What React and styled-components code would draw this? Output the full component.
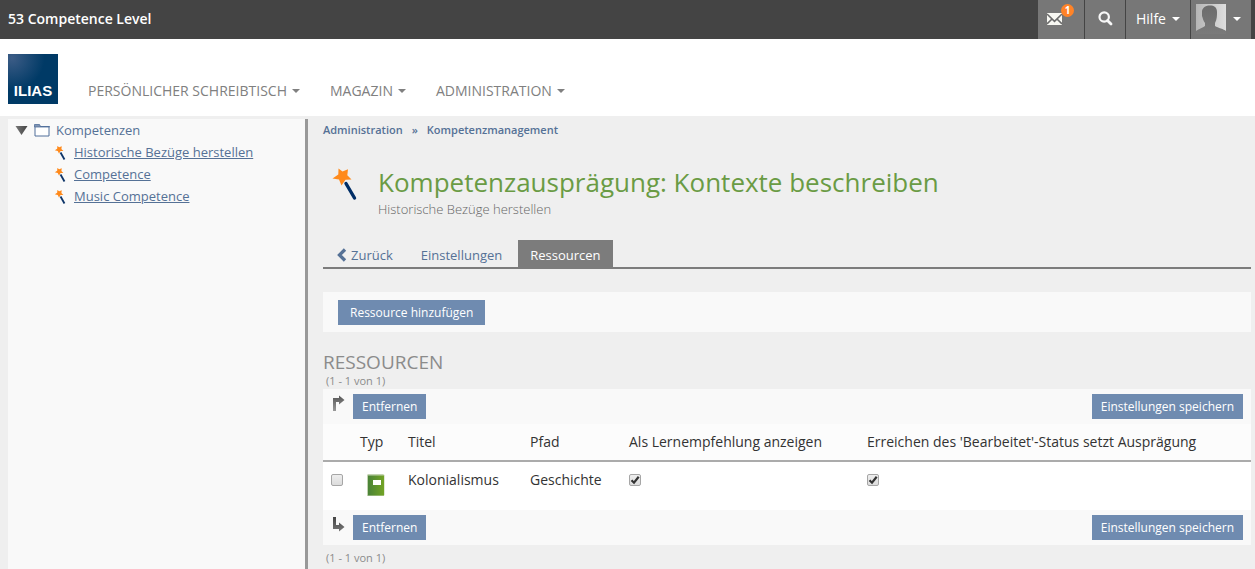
import React from 'react';
import styled, { createGlobalStyle } from 'styled-components';

const GlobalStyle = createGlobalStyle`
  * { box-sizing: border-box; }
  body {
    margin: 0;
    background: #efefef;
    color: #333;
    font-family: "Open Sans", Verdana, sans-serif;
    font-size: 14px;
    line-height: 20px;
  }
  a { color: #557196; text-decoration: none; }
  button { font-family: inherit; border: 0; cursor: pointer; }
`;

const Page = styled.div`
  display: flex;
  flex-direction: column;
  min-height: 100vh;
`;

const TopBar = styled.header`
  display: flex;
  justify-content: space-between;
  height: 39px;
  padding: 0 4px 0 8px;
  background: #444;
`;

const SiteTitle = styled.div`
  color: #fff;
  font-weight: 600;
  line-height: 38px;
`;

const TopActions = styled.nav`
  display: flex;
  gap: 1px;
`;

const TopButton = styled.button`
  position: relative;
  display: flex;
  align-items: center;
  justify-content: ${(p) => p.$align || 'center'};
  width: ${(p) => p.$width}px;
  padding: 0 ${(p) => p.$pad || 0}px 2px;
  gap: 6px;
  background: #777;
  color: #fff;
  font-size: 14px;
  line-height: 36px;
`;

const Badge = styled.span`
  position: absolute;
  top: 4px;
  left: 23px;
  width: 13px;
  height: 13px;
  border-radius: 50%;
  background: #ff8327;
  font-size: 10px;
  font-weight: 700;
  line-height: 13px;
  text-align: center;
`;

const Caret = styled.span`
  border: 4px solid transparent;
  border-top-color: currentColor;
  border-bottom: 0;
`;

const Header = styled.div`
  display: flex;
  align-items: flex-start;
  height: 77px;
  padding: 15px 8px 0;
  background: #fff;
`;

const MainNav = styled.nav`
  display: flex;
  gap: 30px;
  padding: 26px 0 0 30px;
`;

const NavButton = styled.button`
  display: flex;
  align-items: center;
  gap: 5px;
  padding: 0;
  background: none;
  color: #808080;
  font-size: 14px;
  line-height: 22px;
  text-transform: uppercase;
`;

const Body = styled.div`
  display: flex;
  flex: 1;
  padding: 3px 4px 0 8px;
`;

const Sidebar = styled.aside`
  flex: 0 0 300px;
  padding: 0 6px;
  background: #f9f9f9;
  border-right: 3px solid #999;
`;

const TreeList = styled.ul`
  margin: 0;
  padding: ${(p) => (p.$nested ? '0 0 0 40px' : '0')};
  list-style: none;
`;

const TreeRow = styled.div`
  display: flex;
  align-items: center;
  height: 22px;
  gap: ${(p) => (p.$leaf ? 8 : 6)}px;
  font-size: 13px;
`;

const TreeLink = styled.a`
  text-decoration: ${(p) => (p.$underlined ? 'underline' : 'none')};
`;

const Main = styled.main`
  flex: 1;
  min-width: 0;
  padding-left: 15px;
`;

const Breadcrumb = styled.nav`
  display: flex;
  gap: 9px;
  color: #557196;
  font-size: 11px;
  font-weight: 600;
  line-height: 22px;
`;

const TitleRow = styled.div`
  display: flex;
  gap: 17px;
  padding: 24px 0 0 6px;
`;

const Title = styled.h1`
  margin: 0;
  color: #6a9b44;
  font-size: 26px;
  font-weight: 400;
  line-height: 34px;
`;

const Subtitle = styled.div`
  color: #666;
  font-size: 13px;
  font-weight: 300;
  line-height: 20px;
`;

const Tabs = styled.nav`
  display: flex;
  gap: 4px;
  margin-top: 21px;
  padding-left: 2px;
  border-bottom: 2px solid #7c7c7c;
`;

const Tab = styled.a`
  display: flex;
  align-items: center;
  height: 27px;
  padding: 3px 12px 0;
  gap: 4px;
  font-size: 13px;
  ${(p) => p.$active && 'background: #7c7c7c; color: #fff;'}
`;

const Toolbar = styled.div`
  display: flex;
  margin: 23px 0 19px;
  padding: 8px 15px 7px;
  background: #f9f9f9;
`;

const Button = styled.button`
  height: 25px;
  padding: 0 ${(p) => (p.$wide ? 12 : 9)}px;
  background: #6f8bb0;
  color: #fff;
  font-size: 12px;
  line-height: 25px;
  white-space: nowrap;
`;

const SectionTitle = styled.h2`
  margin: 0;
  color: #8b8b8b;
  font-size: 19px;
  font-weight: 400;
  line-height: 22px;
  text-transform: uppercase;
`;

const Count = styled.div`
  padding-left: 3px;
  color: #8b8b8b;
  font-size: 11px;
  line-height: ${(p) => (p.$footer ? 26 : 16)}px;
`;

const CommandRow = styled.div`
  display: flex;
  align-items: center;
  height: 35px;
  padding: 0 8px;
  background: #f9f9f9;
  svg { margin-right: 8px; align-self: flex-start; margin-top: 5px; }
`;

const Spacer = styled.span`
  flex: 1;
`;

const Table = styled.table`
  width: 100%;
  table-layout: fixed;
  border-collapse: separate;
  border-spacing: 0;
  background: #fff;
  th {
    height: 38px;
    padding: 0 8px;
    background: #fcfcfc;
    border-bottom: 2px solid #ababab;
    font-weight: 400;
    text-align: left;
    white-space: nowrap;
  }
  td {
    height: 48px;
    padding: 8px;
    vertical-align: top;
  }
`;

const Col = styled.col`
  width: ${(p) => p.$width}px;
`;

const Check = styled.input`
  appearance: none;
  display: block;
  width: 12px;
  height: 12px;
  margin: 4px 0 0;
  border: 1px solid #a6a6a6;
  border-radius: 2px;
  background: linear-gradient(#eee, #dcdcdc);
  &:checked {
    background: url("data:image/svg+xml,%3Csvg xmlns='http://www.w3.org/2000/svg' viewBox='0 0 10 10'%3E%3Cpath d='M1.5 5.2 4 7.7 8.7 1.8' fill='none' stroke='%23333' stroke-width='2.2'/%3E%3C/svg%3E"), linear-gradient(#eee, #dcdcdc);
  }
`;

const Logo = () => (
  <svg width="50" height="50" viewBox="0 0 50 50" role="img" aria-label="ILIAS">
    <defs>
      <radialGradient id="logoGlow" cx="0.08" cy="0.08" r="0.65">
        <stop offset="0" stopColor="#3c5c86" />
        <stop offset="1" stopColor="#003a66" />
      </radialGradient>
    </defs>
    <rect width="50" height="50" fill="url(#logoGlow)" />
    <text x="25" y="42" fill="#fff" fontFamily="Liberation Sans, sans-serif" fontWeight="700" fontSize="15" textAnchor="middle">ILIAS</text>
  </svg>
);

const Wand = () => (
  <svg width="32" height="38" viewBox="0 0 32 38" aria-hidden="true">
    <path d="M17 18.5 25.500 33" stroke="#002e66" strokeWidth="3.4" strokeLinecap="round" />
    <path d="M9.500 3.500 13.500 6.500 19 4.300 18.300 10.300 22.500 14.500 16.500 14.700 12.500 20.500 10 14.500 3.500 13.500 9.300 9.500Z" fill="#ff8a1c" />
  </svg>
);

const SmallWand = () => (
  <svg width="12" height="16" viewBox="0 0 12 16" aria-hidden="true">
    <path d="M6.500 8.500 10.500 15.500" stroke="#0d3468" strokeWidth="1.8" />
    <path d="M3.300 2 5.200 3.200 7.800 2.300 7.400 5 9.400 7 6.600 7.100 5 9.500 3.700 6.900 0.800 6.300 3.200 4.700Z" fill="#ff8a1c" />
  </svg>
);

const Folder = () => (
  <svg width="16" height="14" viewBox="0 0 16 14" aria-hidden="true">
    <path d="M1 3.500h14v9.500H1Z" fill="#fff" stroke="#516f9a" />
    <path d="M0.500 1.500h5l1 2h9v.500h-15Z" fill="#8195b3" stroke="#516f9a" strokeWidth=".8" />
  </svg>
);

const Expander = () => (
  <svg width="14" height="12" viewBox="0 0 14 12" aria-hidden="true">
    <defs>
      <linearGradient id="expander"><stop stopColor="#777" /><stop offset="1" stopColor="#444" /></linearGradient>
    </defs>
    <path d="M1.500 2h12L7.500 11Z" fill="url(#expander)" />
  </svg>
);

const Envelope = () => (
  <svg width="15" height="12" viewBox="0 0 15 12" aria-hidden="true">
    <path d="M0 0h15v12H0Z" fill="#f7f7f2" />
    <path d="M0 1 7.500 8.300 15 1M0 11 5 6M15 11 10 6" fill="none" stroke="#6c6c6c" strokeWidth="1.6" />
  </svg>
);

const Search = () => (
  <svg width="15" height="16" viewBox="0 0 15 16" aria-hidden="true">
    <circle cx="6.200" cy="6" r="4.700" fill="none" stroke="#f7f7f7" strokeWidth="2.200" />
    <path d="M9.500 9.500 13 13" stroke="#f7f7f7" strokeWidth="2.800" strokeLinecap="round" />
  </svg>
);

const Avatar = () => (
  <svg width="30" height="30" viewBox="0 0 30 30" aria-hidden="true">
    <defs>
      <linearGradient id="person" x2="0" y2="1"><stop stopColor="#6c6c6c" /><stop offset="1" stopColor="#7a7a7a" /></linearGradient>
      <linearGradient id="backdrop"><stop stopColor="#b5b5b5" /><stop offset="1" stopColor="#dedede" /></linearGradient>
    </defs>
    <rect width="30" height="30" fill="url(#backdrop)" />
    <path d="M0 30v-3c2-2 7-3 9-5V19C7 17 7 14 6 12V7c1-4 4-5.500 8-5.500S21 3 21 8c0 4 0 7-2 11v3c3 2 9 3 11 5v3Z" fill="url(#person)" />
  </svg>
);

const Chevron = () => (
  <svg width="10" height="14" viewBox="0 0 10 14" aria-hidden="true">
    <path d="M8 1.500 2.500 7 8 12.500" fill="none" stroke="#557196" strokeWidth="3.3" />
  </svg>
);

const CornerArrow = ({ down }) => (
  <svg width="14" height="18" viewBox="0 0 14 18" aria-hidden="true">
    <defs>
      <linearGradient id={down ? 'arrowDown' : 'arrowUp'} x2="0" y2="1">
        <stop stopColor={down ? '#444' : '#555'} />
        <stop offset="1" stopColor={down ? '#777' : '#999'} />
      </linearGradient>
    </defs>
    <path
      d={down ? 'M2 2h3v8h3V7.500l5.500 4.500L8 16.500V14H2Z' : 'M2 17V4h6V1.500L13.500 6 8 10.500V8H5v9Z'}
      fill={`url(#${down ? 'arrowDown' : 'arrowUp'})`}
    />
  </svg>
);

const BookSvg = styled.svg`
  display: block;
`;

const Book = () => (
  <BookSvg width="18" height="24" viewBox="0 0 18 24" aria-hidden="true">
    <defs>
      <linearGradient id="cover"><stop stopColor="#4a8338" /><stop offset="1" stopColor="#72a324" /></linearGradient>
    </defs>
    <path d="M0 2 1 1h15l1.500 1v20l-1 1H0Z" fill="#c3d3b1" />
    <path d="M1 2.500h16v20H1Z" fill="url(#cover)" />
    <path d="M6 7h8v5H6Z" fill="#fff" />
  </BookSvg>
);

const BookCell = styled.div`
  padding: 3px 0 0 7px;
`;

const UserMenu = styled.span`
  display: flex;
  align-items: center;
  gap: 7px;
  padding-top: 1px;
`;

const skills = ['Historische Bezüge herstellen', 'Competence', 'Music Competence'];
const navItems = ['Persönlicher Schreibtisch', 'Magazin', 'Administration'];

const Commands = ({ down }) => (
  <CommandRow>
    <CornerArrow down={down} />
    <Button type="button">Entfernen</Button>
    <Spacer />
    <Button type="button">Einstellungen speichern</Button>
  </CommandRow>
);

export default function App() {
  return (
    <Page>
      <GlobalStyle />
      <TopBar>
        <SiteTitle>53 Competence Level</SiteTitle>
        <TopActions>
          <TopButton $width={46} $align="flex-start" $pad={9} aria-label="Mail">
            <Envelope />
            <Badge>1</Badge>
          </TopButton>
          <TopButton $width={40} aria-label="Suche"><Search /></TopButton>
          <TopButton $width={64}>Hilfe<Caret /></TopButton>
          <TopButton $width={60} $align="flex-start" $pad={5} aria-label="Benutzer">
            <UserMenu><Avatar /><Caret /></UserMenu>
          </TopButton>
        </TopActions>
      </TopBar>
      <Header>
        <Logo />
        <MainNav>
          {navItems.map((item) => (
            <NavButton key={item} type="button">{item}<Caret /></NavButton>
          ))}
        </MainNav>
      </Header>
      <Body>
        <Sidebar>
          <TreeList>
            <li>
              <TreeRow>
                <Expander />
                <Folder />
                <TreeLink href="#kompetenzen">Kompetenzen</TreeLink>
              </TreeRow>
              <TreeList $nested>
                {skills.map((skill) => (
                  <li key={skill}>
                    <TreeRow $leaf>
                      <SmallWand />
                      <TreeLink href="#skill" $underlined>{skill}</TreeLink>
                    </TreeRow>
                  </li>
                ))}
              </TreeList>
            </li>
          </TreeList>
        </Sidebar>
        <Main>
          <Breadcrumb>
            <a href="#administration">Administration</a>
            <span>»</span>
            <a href="#kompetenzmanagement">Kompetenzmanagement</a>
          </Breadcrumb>
          <TitleRow>
            <Wand />
            <div>
              <Title>Kompetenzausprägung: Kontexte beschreiben</Title>
              <Subtitle>Historische Bezüge herstellen</Subtitle>
            </div>
          </TitleRow>
          <Tabs>
            <Tab href="#back"><Chevron />Zurück</Tab>
            <Tab href="#settings">Einstellungen</Tab>
            <Tab href="#resources" $active>Ressourcen</Tab>
          </Tabs>
          <Toolbar>
            <Button type="button" $wide>Ressource hinzufügen</Button>
          </Toolbar>
          <SectionTitle>Ressourcen</SectionTitle>
          <Count>(1 - 1 von 1)</Count>
          <Commands />
          <Table>
            <colgroup>
              <Col $width={29} />
              <Col $width={48} />
              <Col $width={122} />
              <Col $width={99} />
              <Col $width={238} />
              <col />
            </colgroup>
            <thead>
              <tr>
                <th aria-label="Auswahl" />
                <th>Typ</th>
                <th>Titel</th>
                <th>Pfad</th>
                <th>Als Lernempfehlung anzeigen</th>
                <th>Erreichen des 'Bearbeitet'-Status setzt Ausprägung</th>
              </tr>
            </thead>
            <tbody>
              <tr>
                <td><Check type="checkbox" aria-label="Kolonialismus auswählen" /></td>
                <td><BookCell><Book /></BookCell></td>
                <td>Kolonialismus</td>
                <td>Geschichte</td>
                <td><Check type="checkbox" defaultChecked aria-label="Als Lernempfehlung anzeigen" /></td>
                <td><Check type="checkbox" defaultChecked aria-label="Erreichen des Status setzt Ausprägung" /></td>
              </tr>
            </tbody>
          </Table>
          <Commands down />
          <Count $footer>(1 - 1 von 1)</Count>
        </Main>
      </Body>
    </Page>
  );
}
